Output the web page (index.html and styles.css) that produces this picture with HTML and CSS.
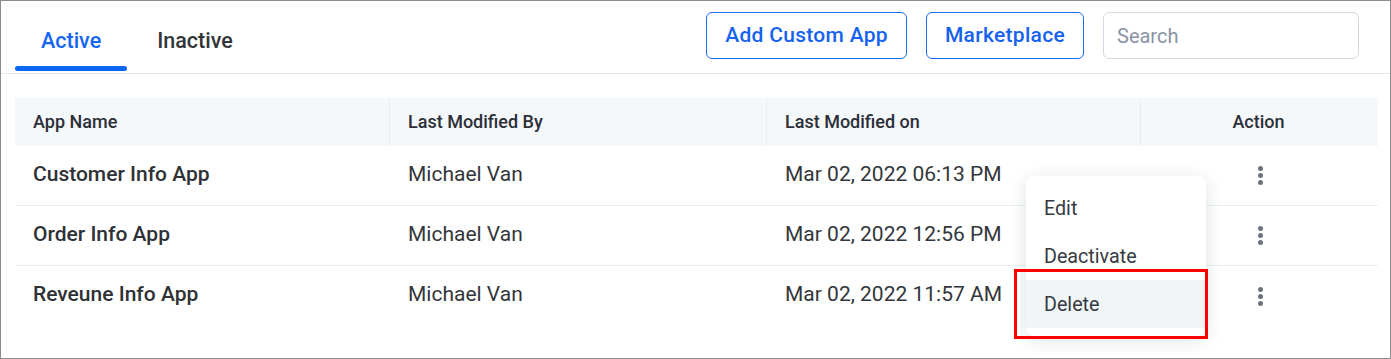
FILE: index.html
```html
<!DOCTYPE html>
<html lang="en">
<head>
<meta charset="utf-8">
<title>Apps</title>
<link rel="stylesheet" href="styles.css">
</head>
<body>
<div class="frame">
  <div class="topbar">
    <div class="tabs">
      <div class="tab tab-active"><span class="tab-label">Active</span><span class="tab-bar"></span></div>
      <div class="tab"><span class="tab-label">Inactive</span><span class="tab-bar"></span></div>
    </div>
    <div class="actions">
      <button class="btn">Add Custom App</button>
      <button class="btn">Marketplace</button>
      <div class="search">Search</div>
    </div>
  </div>

  <div class="table">
    <div class="thead">
      <div class="th">App Name</div>
      <div class="th">Last Modified By</div>
      <div class="th">Last Modified on</div>
      <div class="th th-center">Action</div>
    </div>
    <div class="tr">
      <div class="td td-name">Customer Info App</div>
      <div class="td">Michael Van</div>
      <div class="td">Mar 02, 2022 06:13 PM</div>
      <div class="td td-center"><span class="kebab"><i></i><i></i><i></i></span></div>
    </div>
    <div class="tr">
      <div class="td td-name">Order Info App</div>
      <div class="td">Michael Van</div>
      <div class="td">Mar 02, 2022 12:56 PM</div>
      <div class="td td-center"><span class="kebab"><i></i><i></i><i></i></span></div>
    </div>
    <div class="tr tr-last">
      <div class="td td-name">Reveune Info App</div>
      <div class="td">Michael Van</div>
      <div class="td">Mar 02, 2022 11:57 AM</div>
      <div class="td td-center"><span class="kebab"><i></i><i></i><i></i></span></div>
    </div>
  </div>

  <div class="menu">
    <div class="menu-item">Edit</div>
    <div class="menu-item">Deactivate</div>
    <div class="menu-item menu-item-hover">Delete</div>
  </div>
  <div class="highlight"></div>
</div>
</body>
</html>
```

FILE: styles.css
```css
* { box-sizing: border-box; }

body {
  margin: 0;
  font-family: Roboto, "Liberation Sans", Arial, sans-serif;
  color: #2f3237;
  background: #fff;
}

.frame {
  position: relative;
  width: 1391px;
  height: 359px;
  border: 1px solid #8c8c8c;
  overflow: hidden;
}

.topbar {
  display: flex;
  justify-content: space-between;
  height: 73px;
  border-bottom: 1px solid #e3e8ef;
  padding: 0 31px 0 14px;
}

.tabs {
  display: flex;
  gap: 4px;
}

.tab {
  display: flex;
  flex-direction: column;
  align-items: stretch;
  padding-top: 28px;
}

.tab-label {
  display: block;
  padding: 0 26px;
  font-size: 21.5px;
  line-height: 24px;
  font-weight: 500;
  color: #333539;
  text-align: center;
}

.tab-bar {
  display: block;
  height: 5px;
  margin-top: 13px;
  border-radius: 3px;
}

.tab-active .tab-label { color: #1666f5; }
.tab-active .tab-bar { background: #0b66f4; }

.actions {
  display: flex;
  align-items: flex-start;
  gap: 19px;
  padding-top: 11px;
}

.btn {
  height: 47px;
  padding: 0 18px;
  border: 1px solid #1a6cf2;
  border-radius: 6px;
  background: #fff;
  color: #1662f0;
  font-family: inherit;
  font-size: 21px;
  font-weight: 500;
  letter-spacing: 0.3px;
  line-height: 45px;
  cursor: pointer;
}

.search {
  width: 256px;
  height: 47px;
  padding: 0 13px;
  border: 1px solid #d2d9e2;
  border-radius: 6px;
  font-size: 20px;
  line-height: 46px;
  color: #8a93a3;
}

.table {
  margin: 24px 12px 0 14px;
}

.thead, .tr {
  display: grid;
  grid-template-columns: 374px 377px 374px 1fr;
}

.thead {
  height: 48px;
  background: #f5f8fb;
}

.th {
  display: flex;
  align-items: center;
  padding-left: 18px;
  padding-bottom: 1px;
  font-size: 18px;
  font-weight: 500;
  color: #2b2f38;
  border-left: 1px solid #e8edf3;
}

.th:first-child { border-left: none; }
.th-center { justify-content: center; padding-left: 0; padding-right: 2px; }

.tr {
  height: 60px;
  border-bottom: 1px solid #e9eff5;
}

.tr-last { border-bottom: none; }

.td {
  display: flex;
  align-items: center;
  padding-left: 19px;
  padding-bottom: 4px;
  font-size: 21px;
  color: #33363b;
}

.td:first-child { padding-left: 18px; }

.td-name {
  font-weight: 500;
  color: #2e3135;
}

.td-center { justify-content: center; padding-left: 0; padding-bottom: 0; }

.kebab {
  display: flex;
  flex-direction: column;
  gap: 2px;
  margin-left: 2px;
}

.kebab i {
  display: block;
  width: 5px;
  height: 5px;
  border-radius: 50%;
  background: #6d737c;
}

.menu {
  position: absolute;
  left: 1025px;
  top: 175px;
  width: 180px;
  padding: 8px 0;
  background: #fff;
  border-radius: 8px;
  box-shadow: 0 4px 18px rgba(30, 40, 60, 0.14);
}

.menu-item {
  height: 48px;
  padding-left: 18px;
  display: flex;
  align-items: center;
  font-size: 19.7px;
  color: #363a42;
}

.menu-item-hover { background: #f2f5f8; }

.highlight {
  position: absolute;
  left: 1013px;
  top: 268px;
  width: 194px;
  height: 70px;
  border: 3px solid #ff0000;
}
```
